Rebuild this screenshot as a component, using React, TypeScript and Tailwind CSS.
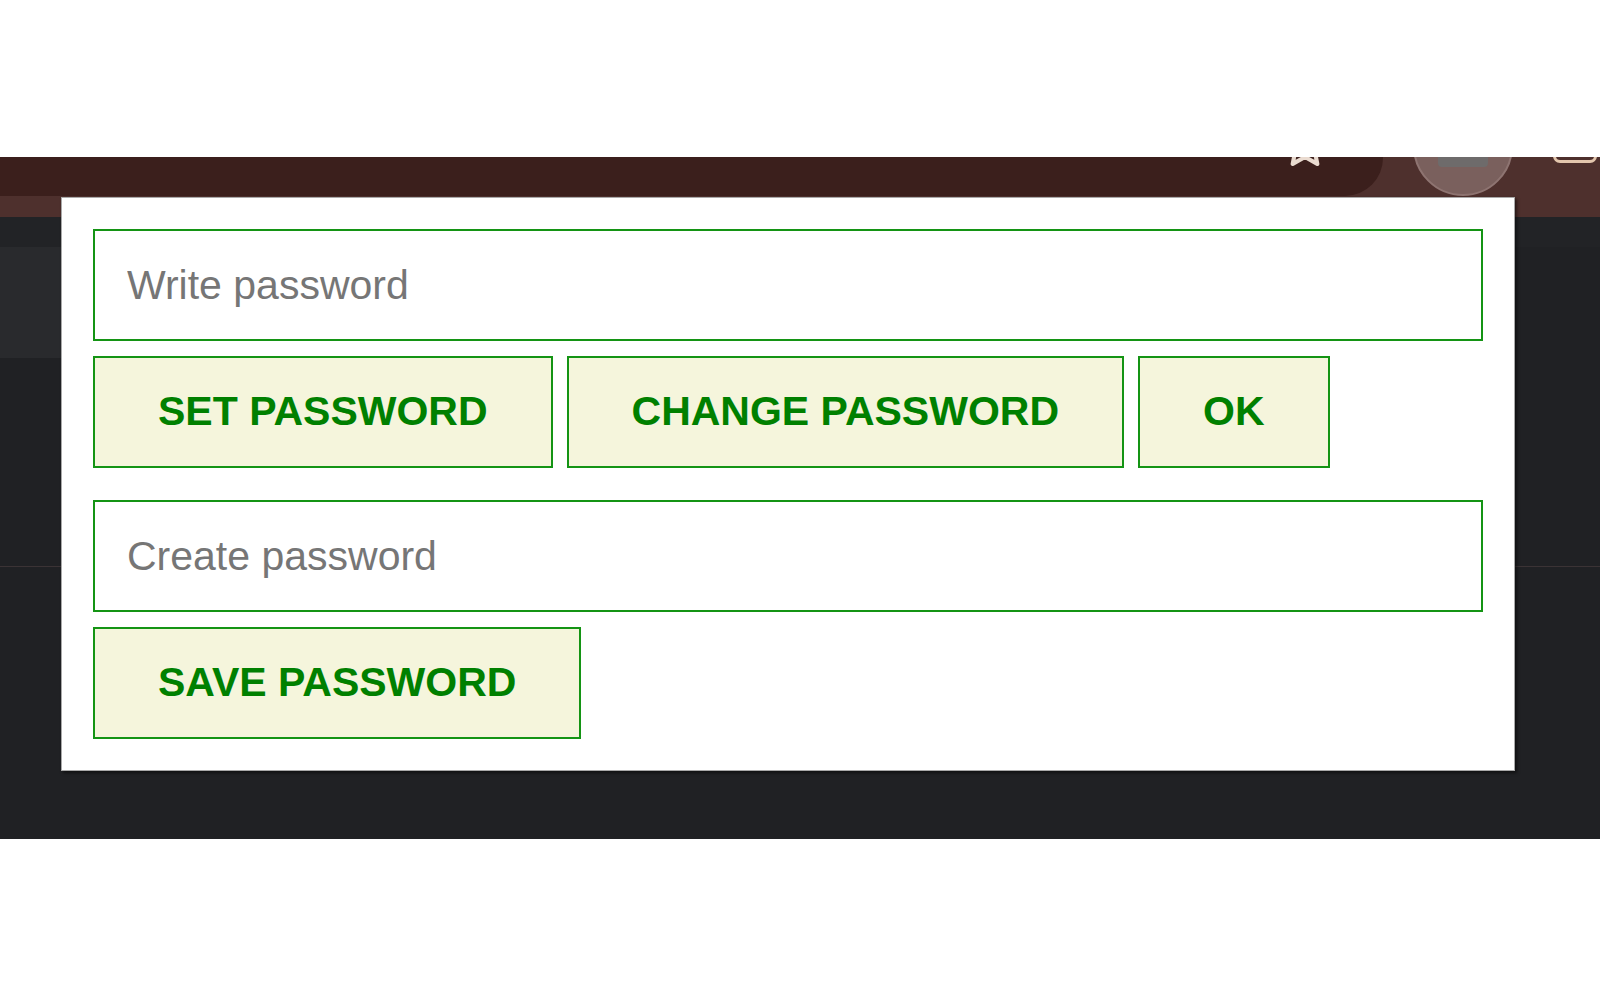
import React from "react";

function Star() {
  return (
    <svg width="50" height="50" viewBox="0 0 24 24" fill="none" stroke="#eadbd0" strokeWidth="2" strokeLinejoin="round">
      <path d="M12 2.5l2.9 6.1 6.6.8-4.9 4.6 1.3 6.6L12 17.3l-5.9 3.3 1.3-6.6-4.9-4.6 6.6-.8z" />
    </svg>
  );
}

const btn =
  "h-[112px] px-[63px] border-[2.5px] border-[#149414] bg-[#f5f5dc] text-[#008000] font-bold text-[41px]";
const inp =
  "w-full h-[112px] border-[2.5px] border-[#149414] bg-white px-[32px] text-[41px] text-[#333] placeholder:text-[#767676] outline-none";

export default function App() {
  return (
    <div className="w-[1600px] h-[1000px] bg-white flex flex-col font-['Liberation_Sans',Arial,sans-serif]">
      <div className="h-[157px] shrink-0 bg-white" />
      <div className="relative h-[682px] shrink-0 bg-[#202124] flex flex-col overflow-hidden">
        {/* browser toolbar */}
        <div className="h-[60px] shrink-0 bg-[#4e302d] flex items-start overflow-hidden">
          <div className="w-[1383px] h-[39px] shrink-0 bg-[#3b1f1c] rounded-br-[38px] overflow-hidden flex justify-end pr-[53px]">
            <div className="-mt-[36px]">
              <Star />
            </div>
          </div>
          <div className="ml-[30px] -mt-[61px] w-[100px] h-[100px] shrink-0 rounded-full bg-[#7a605d] border-2 border-[#8e7471] flex justify-center">
            <div className="mt-[59px] w-[50px] h-[10px] rounded-b-[4px] bg-[#6e6b6b]" />
          </div>
          <div className="ml-[40px] -mt-[18px] w-[44px] h-[24px] shrink-0 rounded-[7px] border-[3px] border-[#e3c6ad]" />
        </div>
        {/* page content */}
        <div className="h-[30px] shrink-0 bg-[#222326]" />
        <div className="h-[111px] w-[1200px] shrink-0 bg-[#292a2d]" />
        <div className="h-[208px] shrink-0" />
        <div className="h-[1px] shrink-0 bg-[#3b3335]" />
        <div className="flex-1" />

        {/* extension popup overlay */}
        <div className="absolute left-[61px] top-[40px] w-[1454px] bg-white border border-[#a9a9a9] shadow-[2px_2px_3px_rgba(0,0,0,0.5)] p-[31px] flex flex-col">
          <input type="password" placeholder="Write password" className={inp} />
          <div className="mt-[15px] flex gap-[14px]">
            <button className={btn}>SET PASSWORD</button>
            <button className={btn}>CHANGE PASSWORD</button>
            <button className={btn}>OK</button>
          </div>
          <input type="password" placeholder="Create password" className={"mt-[32px] " + inp} />
          <div className="mt-[15px] flex">
            <button className={btn}>SAVE PASSWORD</button>
          </div>
        </div>
      </div>
      <div className="flex-1 bg-white" />
    </div>
  );
}
